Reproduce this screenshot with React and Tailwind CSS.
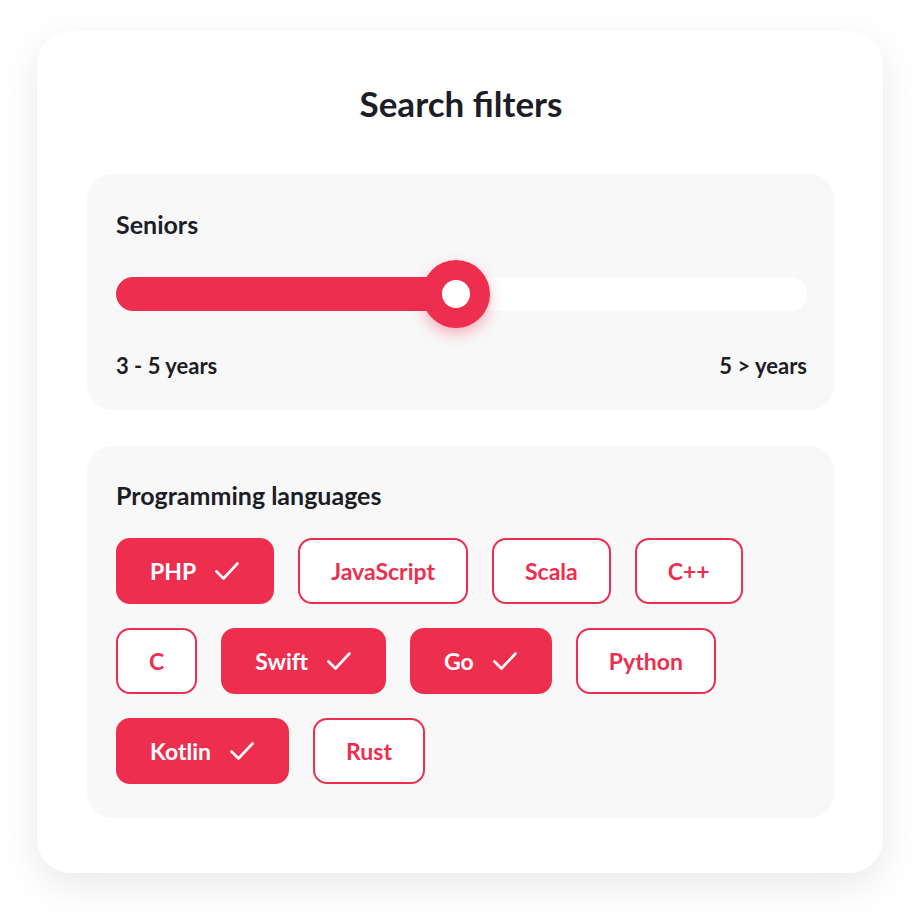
import React, { useState } from 'react';

const languages = [
  { name: 'PHP', selected: true },
  { name: 'JavaScript', selected: false },
  { name: 'Scala', selected: false },
  { name: 'C++', selected: false },
  { name: 'C', selected: false },
  { name: 'Swift', selected: true },
  { name: 'Go', selected: true },
  { name: 'Python', selected: false },
  { name: 'Kotlin', selected: true },
  { name: 'Rust', selected: false },
];

const Check = () => (
  <svg className="w-[24px] h-[20px]" viewBox="0 0 24 20" fill="none">
    <path d="M1.5 10.5l7 7L22.5 2.5" stroke="white" strokeWidth="2.6" strokeLinecap="round" strokeLinejoin="round" />
  </svg>
);

const Chip = ({ name, selected, onToggle }) => (
  <button
    onClick={onToggle}
    className={`h-[66px] rounded-[14px] border-[2.5px] border-[#ee2e4f] flex items-center text-[23px] font-bold leading-none ${
      selected ? 'bg-[#ee2e4f] text-white pl-[32px] pr-[33px] gap-[19px]' : 'bg-white text-[#ee2e4f] px-[31px]'
    }`}
  >
    <span>{name}</span>
    {selected && <Check />}
  </button>
);

export default function App() {
  const [items, setItems] = useState(languages);

  const toggle = (i) => {
    setItems(items.map((it, idx) => (idx === i ? { ...it, selected: !it.selected } : it)));
  };

  return (
    <div className="w-[920px] h-[916px] bg-white pt-[31px] pl-[37px] font-['Lato','Liberation_Sans',sans-serif] text-[#1c1d26]">
      <div className="w-[846px] h-[842px] bg-white rounded-[34px] shadow-[0_12px_40px_rgba(0,0,0,0.09)] pl-[50px] pr-[48px] pt-[52px]">
        {/* Title */}
        <h1 className="text-[35px] font-bold text-center leading-[40px]">Search filters</h1>

        {/* Seniors slider */}
        <div className="mt-[51px] bg-[#f8f8f8] rounded-[26px] pt-[36px] pb-[32px] pl-[29px] pr-[28px]">
          <h2 className="text-[25px] font-bold leading-[28px]">Seniors</h2>
          <div className="mt-[22px] h-[68px] flex items-center relative">
            <div className="h-[34px] w-full bg-white rounded-full">
              <div className="h-full w-[340px] bg-[#ee2e4f] rounded-l-full" />
            </div>
            <div className="absolute left-[306px] top-0 w-[68px] h-[68px] rounded-full bg-[#ee2e4f] flex items-center justify-center shadow-[0_6px_14px_rgba(238,46,79,0.35)]">
              <div className="w-[28px] h-[28px] rounded-full bg-white" />
            </div>
          </div>
          <div className="mt-[26px] flex justify-between text-[22px] font-bold leading-[24px]">
            <span>3 - 5 years</span>
            <span>5 &gt; years</span>
          </div>
        </div>

        {/* Programming languages */}
        <div className="mt-[36px] bg-[#f8f8f8] rounded-[26px] pt-[35px] pb-[34px] pl-[29px] pr-[28px]">
          <h2 className="text-[25px] font-bold leading-[28px]">Programming languages</h2>
          <div className="mt-[29px] flex flex-wrap gap-[24px] w-[640px]">
            {items.map((it, i) => (
              <Chip key={it.name} name={it.name} selected={it.selected} onToggle={() => toggle(i)} />
            ))}
          </div>
        </div>
      </div>
    </div>
  );
}
